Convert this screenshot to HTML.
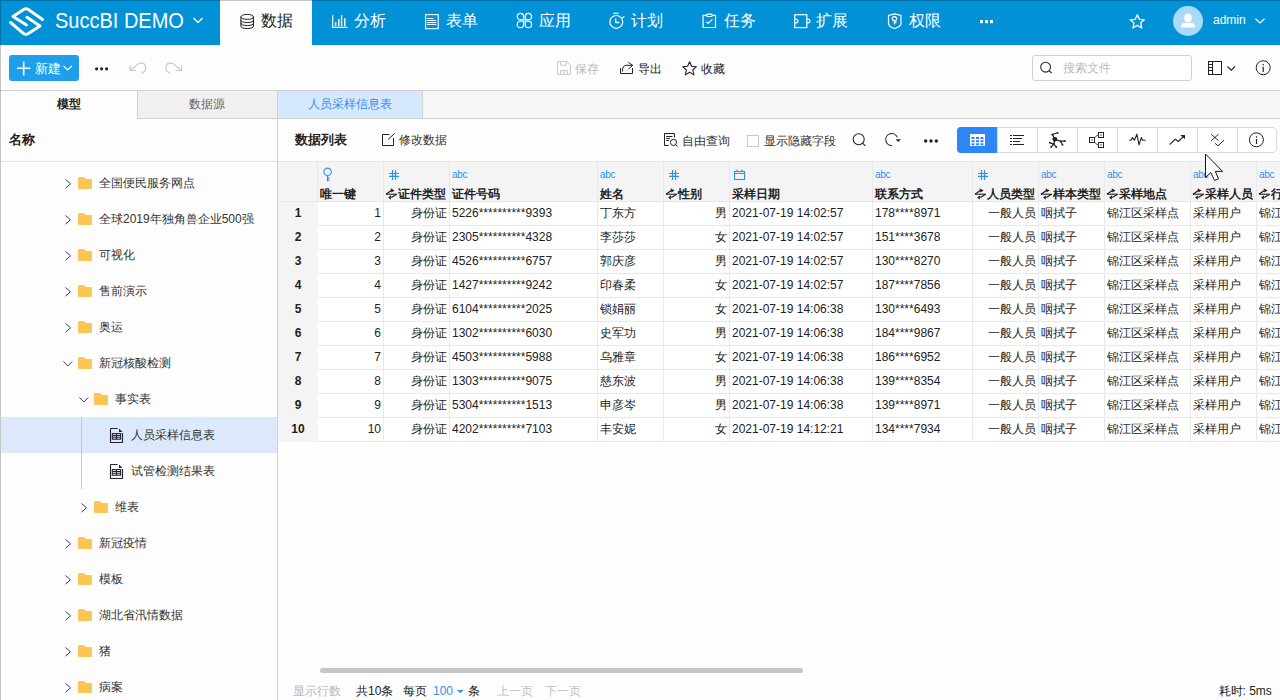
<!DOCTYPE html>
<html><head><meta charset="utf-8">
<style>
*{box-sizing:border-box;margin:0;padding:0}
html,body{width:1280px;height:700px;overflow:hidden;background:#fdfdfd;font-family:"Liberation Sans",sans-serif;color:#222}
.a{position:absolute;white-space:nowrap}
svg{position:absolute;overflow:visible}
#hdr{position:absolute;left:0;top:0;width:1280px;height:45px;background:#0091d6}
.nav{color:#fff;font-size:16px;line-height:16px;top:13px}
.t12{font-size:12px;line-height:14px}
.t13{font-size:13px;line-height:15px}
</style></head><body>
<div id="hdr"></div>
<!-- logo -->
<svg style="left:0;top:0" width="60" height="45" viewBox="0 0 60 45" fill="none" stroke="#fff" stroke-width="3" stroke-linecap="round" stroke-linejoin="round">
<path d="M42.5 19.5 L28 9.3 Q26 8 24 9.3 L13 16.5 L26.5 25"/>
<path d="M27 17.3 L40 26 L28 33.8 Q26 35 24 33.8 L10.5 22.5"/>
</svg>
<div class="a nav" style="left:55px;top:9.5px;font-size:20px;line-height:22px;transform:scaleY(1.06);transform-origin:0 17px">SuccBI DEMO</div>
<svg style="left:193px;top:17px" width="10" height="7" fill="none" stroke="#fff" stroke-width="1.3"><path d="M0.5 1 L5 5.5 L9.5 1"/></svg>
<!-- active tab -->
<div class="a" style="left:220px;top:0;width:92px;height:45px;background:#fdfdfd"></div>
<!-- NAV ICONS -->
<svg style="left:235px;top:8px" width="25" height="25" fill="none" stroke="#222" stroke-width="1">
<ellipse cx="12.2" cy="8.9" rx="6.3" ry="2.5"/>
<path d="M5.9 8.9 V18 M18.5 8.9 V18"/>
<path d="M5.9 12 Q5.9 14.5 12.2 14.5 Q18.5 14.5 18.5 12"/>
<path d="M5.9 15 Q5.9 17.5 12.2 17.5 Q18.5 17.5 18.5 15"/>
<path d="M5.9 18 Q5.9 20.5 12.2 20.5 Q18.5 20.5 18.5 18"/>
</svg>
<div class="a nav" style="left:261px;color:#222">数据</div>

<svg style="left:325px;top:8px" width="25" height="25" fill="none" stroke="#fff" stroke-width="1.2">
<path d="M7.7 7 V19.3 H22.5"/><path d="M10.7 14.1 V18.2 M13.75 11 V18.2 M16.6 7 V18.2 M19.8 10.2 V18.2" stroke-width="1.4"/>
</svg>
<div class="a nav" style="left:354px">分析</div>

<svg style="left:418px;top:8px" width="25" height="25" fill="none" stroke="#fff" stroke-width="1.1">
<rect x="7.6" y="6.6" width="12.6" height="14.1"/><path d="M8.9 10.5 H15.3 M8.9 12.5 H18.2 M8.9 14.5 H18.2 M8.9 16.4 H18.2" stroke-width="1"/>
</svg>
<div class="a nav" style="left:446px">表单</div>

<svg style="left:510px;top:8px" width="25" height="25" fill="none" stroke="#fff" stroke-width="1.2">
<path d="M13.6 11.7 H10.4 A3.2 3.2 0 1 1 13.6 8.5 Z"/><path d="M15.2 11.7 H18.4 A3.2 3.2 0 1 0 15.2 8.5 Z"/>
<path d="M13.6 13.2 H10.4 A3.2 3.2 0 1 0 13.6 16.4 Z"/><path d="M15.2 13.2 H18.4 A3.2 3.2 0 1 1 15.2 16.4 Z"/>
</svg>
<div class="a nav" style="left:539px">应用</div>

<svg style="left:604px;top:8px" width="25" height="25" fill="none" stroke="#fff" stroke-width="1.2">
<circle cx="12.3" cy="13.9" r="6.4"/><path d="M9.3 5.4 H14.6 M18.2 10 L20.4 8.4"/><path d="M11.7 10.4 V14.5 H15.4" stroke-width="1.3"/>
</svg>
<div class="a nav" style="left:631px">计划</div>

<svg style="left:697px;top:8px" width="25" height="25" fill="none" stroke="#fff" stroke-width="1.2">
<path d="M9.4 7.3 H6.1 V19.5 H18.5 V7.3 H15.2"/><rect x="9.6" y="6.2" width="5.6" height="2.3" rx="1"/><path d="M9.3 13.6 L11.1 15.4 L15.5 11.4"/>
</svg>
<div class="a nav" style="left:724px">任务</div>

<svg style="left:788px;top:8px" width="25" height="25" fill="none" stroke="#fff" stroke-width="1.2">
<rect x="6.7" y="6.7" width="12.1" height="12.9"/><path d="M6.7 11 H8 A1.9 1.9 0 0 1 8 14.8 H6.7 M18.8 11 H20 A1.9 1.9 0 0 1 20 14.8 H18.8"/>
</svg>
<div class="a nav" style="left:816px">扩展</div>

<svg style="left:882px;top:8px" width="25" height="25" fill="none" stroke="#fff" stroke-width="1.2">
<path d="M12.5 5.9 L19 7.4 V15.2 Q19 18.6 12.5 20.5 Q6.5 18.6 6.5 15.2 V7.4 Z"/><circle cx="12.5" cy="10.8" r="2.1"/><path d="M12.5 12.9 V16.6 M12.5 14.4 H14.6"/>
</svg>
<div class="a nav" style="left:909px">权限</div>

<svg style="left:980px;top:19.5px" width="14" height="4" fill="#fff"><rect x="0" y="0" width="3" height="3.2"/><rect x="5" y="0" width="3" height="3.2"/><rect x="10" y="0" width="3" height="3.2"/></svg>

<svg style="left:1129px;top:14px" width="17" height="15" fill="none" stroke="#fff" stroke-width="1.3" stroke-linejoin="round">
<path d="M8.3 0.8 L10.4 5.3 L15.4 5.8 L11.6 9.1 L12.7 14 L8.3 11.4 L3.9 14 L5 9.1 L1.2 5.8 L6.2 5.3 Z"/>
</svg>
<div class="a" style="left:1173px;top:6px;width:30px;height:30px;border-radius:50%;background:#abdaf9;overflow:hidden">
<svg style="left:0;top:0" width="30" height="30" fill="#fff"><ellipse cx="15" cy="12" rx="3.7" ry="4.5"/><path d="M8 21.6 V20 Q8 17.4 12 16.8 L15 17.6 L18 16.8 Q22 17.4 22 20 V21.6 Z"/></svg>
</div>
<div class="a" style="left:1213px;top:13px;color:#fff;font-size:12px;line-height:14px">admin</div>
<svg style="left:1255px;top:18px" width="10" height="6" fill="none" stroke="#fff" stroke-width="1.2"><path d="M0.5 0.8 L5 5 L9.5 0.8"/></svg>

<!-- TOOLBAR -->
<div class="a" style="left:9px;top:55px;width:70px;height:26px;border-radius:3px;background:#1f9fe9"></div>
<svg style="left:17px;top:60.7px" width="14" height="15" fill="none" stroke="#fff" stroke-width="1.6"><path d="M6.7 0.5 V14.5 M0 7.3 H13.3"/></svg>
<div class="a" style="left:34.5px;top:62px;color:#fff;font-size:12.5px;line-height:14px">新建</div>
<svg style="left:63px;top:65px" width="10" height="6" fill="none" stroke="#fff" stroke-width="1.2"><path d="M0.5 0.8 L4.7 5 L9 0.8"/></svg>
<svg style="left:95px;top:66.5px" width="14" height="4" fill="#222"><circle cx="1.6" cy="1.8" r="1.6"/><circle cx="6.6" cy="1.8" r="1.6"/><circle cx="11.6" cy="1.8" r="1.6"/></svg>
<svg style="left:125px;top:55px" width="65" height="27" fill="none" stroke="#c6c9c9" stroke-width="1.1">
<path d="M5.1 10.2 V15.5 H10.9 M5.5 15 L13.5 8.6 Q14.5 8.1 16.5 8.1 Q20.6 8.1 20.6 12.7 Q20.6 16.5 16.3 18.5"/>
<path d="M56.4 10.2 V15.5 H50.6 M56 15 L48 8.6 Q47 8.1 45 8.1 Q40.9 8.1 40.9 12.7 Q40.9 16.5 45.2 18.5"/>
</svg>

<svg style="left:552px;top:56px" width="25" height="24" fill="none" stroke="#c8cbcb" stroke-width="1">
<path d="M5.5 5.5 H14.7 L18.5 9.2 V18.5 H5.5 Z"/><path d="M8.5 5.5 V9.2 H14.2 V5.5"/><path d="M8.5 18.5 V14.5 H15.6 V18.5 M11.8 14.5 V18.5"/>
</svg>
<div class="a t12" style="left:575px;top:61.7px;color:#bbb">保存</div>
<svg style="left:615px;top:56px" width="25" height="24" fill="none" stroke="#222" stroke-width="1">
<path d="M5.5 12 V17.5 H17.5 V12"/><path d="M7.4 15.6 Q7.4 9.3 11 9.3 H17.6"/><path d="M13.4 6.3 L17.7 9.3 L13.4 13.2"/>
</svg>
<div class="a t12" style="left:638px;top:61.7px">导出</div>
<svg style="left:682px;top:61px" width="16" height="15" fill="none" stroke="#222" stroke-width="1.1" stroke-linejoin="round">
<path d="M7.6 0.8 L9.6 5.3 L14.5 5.7 L10.8 9 L11.9 13.9 L7.6 11.3 L3.3 13.9 L4.4 9 L0.7 5.7 L5.6 5.3 Z"/>
</svg>
<div class="a t12" style="left:701px;top:61.7px">收藏</div>

<div class="a" style="left:1032px;top:55px;width:160px;height:26px;border:1px solid #d0d0d0;border-radius:3px;background:#fff"></div>
<svg style="left:1040px;top:62px" width="13" height="12" fill="none" stroke="#222" stroke-width="1.05"><circle cx="5.6" cy="5.2" r="4.9"/><path d="M9 8.6 L11.6 11"/></svg>
<div class="a t12" style="left:1063px;top:61px;color:#bbb">搜索文件</div>
<svg style="left:1207px;top:61px" width="16" height="14" fill="none" stroke="#222" stroke-width="1"><rect x="1.5" y="0.5" width="13" height="13"/><path d="M5.5 0.5 V13.5 M1.5 3.5 H5.5 M1.5 6.5 H5.5 M1.5 9.5 H5.5"/></svg>
<svg style="left:1227px;top:65.5px" width="9" height="5" fill="none" stroke="#222" stroke-width="1.1"><path d="M0.5 0.5 L4.3 4.2 L8 0.5"/></svg>
<svg style="left:1255px;top:60px" width="16" height="16" fill="none" stroke="#222" stroke-width="1"><circle cx="8.2" cy="7.7" r="7"/><path d="M8.2 6.8 V12" stroke-width="1.2"/><rect x="7.6" y="3.9" width="1.2" height="1.4" fill="#222" stroke="none"/></svg>

<!-- TAB STRIP -->
<div class="a" style="left:0;top:90px;width:1280px;height:1px;background:#d2d2d2"></div>
<div class="a" style="left:1px;top:91px;width:136px;height:27px;background:#fdfdfd"></div>
<div class="a" style="left:137px;top:91px;width:140px;height:28px;background:#f0f0f0;border-left:1px solid #d2d2d2;border-bottom:1px solid #d2d2d2"></div>
<div class="a" style="left:277px;top:91px;width:146px;height:28px;background:#d6e8fd;border-left:1px solid #d2d2d2;border-right:1px solid #d2d2d2;border-bottom:1px solid #d2d2d2"></div>
<div class="a" style="left:423px;top:91px;width:857px;height:28px;background:#f7f7f7;border-bottom:1px solid #d2d2d2"></div>
<div class="a t12" style="left:57px;top:97px;font-weight:bold">模型</div>
<div class="a t12" style="left:189px;top:97px;color:#666">数据源</div>
<div class="a t12" style="left:308px;top:97px;color:#3b8cf2">人员采样信息表</div>

<!-- GEN -->
<div class="a" style="left:277px;top:118px;width:1px;height:582px;background:#d2d2d2"></div>
<div class="a" style="left:1px;top:161px;width:276px;height:1px;background:#e3e3e3"></div>
<div class="a t13" style="left:9px;top:132px;font-weight:bold">名称</div>
<svg style="left:65px;top:178.5px" width="7" height="10" fill="none" stroke="#333" stroke-width="0.95"><path d="M0.5 0.5 L5.5 4.8 L0.5 9.2"/></svg>
<svg style="left:78px;top:177px" width="14" height="12"><path d="M0 1 Q0 0 1 0 H6 L8 2 H13 Q14 2 14 3 V11 Q14 12 13 12 H1 Q0 12 0 11 Z" fill="#fcc655"/></svg>
<div class="a t12" style="left:99px;top:176px;color:#333">全国便民服务网点</div>
<svg style="left:65px;top:214.5px" width="7" height="10" fill="none" stroke="#333" stroke-width="0.95"><path d="M0.5 0.5 L5.5 4.8 L0.5 9.2"/></svg>
<svg style="left:78px;top:213px" width="14" height="12"><path d="M0 1 Q0 0 1 0 H6 L8 2 H13 Q14 2 14 3 V11 Q14 12 13 12 H1 Q0 12 0 11 Z" fill="#fcc655"/></svg>
<div class="a t12" style="left:99px;top:212px;color:#333">全球2019年独角兽企业500强</div>
<svg style="left:65px;top:250.5px" width="7" height="10" fill="none" stroke="#333" stroke-width="0.95"><path d="M0.5 0.5 L5.5 4.8 L0.5 9.2"/></svg>
<svg style="left:78px;top:249px" width="14" height="12"><path d="M0 1 Q0 0 1 0 H6 L8 2 H13 Q14 2 14 3 V11 Q14 12 13 12 H1 Q0 12 0 11 Z" fill="#fcc655"/></svg>
<div class="a t12" style="left:99px;top:248px;color:#333">可视化</div>
<svg style="left:65px;top:286.5px" width="7" height="10" fill="none" stroke="#333" stroke-width="0.95"><path d="M0.5 0.5 L5.5 4.8 L0.5 9.2"/></svg>
<svg style="left:78px;top:285px" width="14" height="12"><path d="M0 1 Q0 0 1 0 H6 L8 2 H13 Q14 2 14 3 V11 Q14 12 13 12 H1 Q0 12 0 11 Z" fill="#fcc655"/></svg>
<div class="a t12" style="left:99px;top:284px;color:#333">售前演示</div>
<svg style="left:65px;top:322.5px" width="7" height="10" fill="none" stroke="#333" stroke-width="0.95"><path d="M0.5 0.5 L5.5 4.8 L0.5 9.2"/></svg>
<svg style="left:78px;top:321px" width="14" height="12"><path d="M0 1 Q0 0 1 0 H6 L8 2 H13 Q14 2 14 3 V11 Q14 12 13 12 H1 Q0 12 0 11 Z" fill="#fcc655"/></svg>
<div class="a t12" style="left:99px;top:320px;color:#333">奥运</div>
<svg style="left:62.5px;top:360.5px" width="10" height="6" fill="none" stroke="#333" stroke-width="0.95"><path d="M0.5 0.5 L4.8 5 L9.2 0.5"/></svg>
<svg style="left:78px;top:357px" width="14" height="12"><path d="M0 1 Q0 0 1 0 H6 L8 2 H13 Q14 2 14 3 V11 Q14 12 13 12 H1 Q0 12 0 11 Z" fill="#fcc655"/></svg>
<div class="a t12" style="left:99px;top:356px;color:#333">新冠核酸检测</div>
<svg style="left:78.5px;top:396.5px" width="10" height="6" fill="none" stroke="#333" stroke-width="0.95"><path d="M0.5 0.5 L4.8 5 L9.2 0.5"/></svg>
<svg style="left:94px;top:393px" width="14" height="12"><path d="M0 1 Q0 0 1 0 H6 L8 2 H13 Q14 2 14 3 V11 Q14 12 13 12 H1 Q0 12 0 11 Z" fill="#fcc655"/></svg>
<div class="a t12" style="left:115px;top:392px;color:#333">事实表</div>
<div class="a" style="left:1px;top:417px;width:276px;height:36px;background:#dbe9fb"></div>
<svg style="left:110px;top:427.7px" width="13" height="15" fill="none" stroke="#2a2233" stroke-width="1.1"><path d="M0.5 0.5 H7.5 M12.5 5 V14.5 H0.5 V0.5"/><path d="M9 0.5 L12.5 4 H9 Z" fill="#2a2233" stroke="none"/><rect x="2.3" y="5.6" width="8.3" height="5.6"/><path d="M2.3 7.5 H10.6 M2.3 9.3 H10.6 M6.45 5.6 V11.2"/></svg>
<div class="a t12" style="left:131px;top:428px;color:#333">人员采样信息表</div>
<svg style="left:110px;top:463.7px" width="13" height="15" fill="none" stroke="#2a2233" stroke-width="1.1"><path d="M0.5 0.5 H7.5 M12.5 5 V14.5 H0.5 V0.5"/><path d="M9 0.5 L12.5 4 H9 Z" fill="#2a2233" stroke="none"/><rect x="2.3" y="5.6" width="8.3" height="5.6"/><path d="M2.3 7.5 H10.6 M2.3 9.3 H10.6 M6.45 5.6 V11.2"/></svg>
<div class="a t12" style="left:131px;top:464px;color:#333">试管检测结果表</div>
<svg style="left:81px;top:502.5px" width="7" height="10" fill="none" stroke="#333" stroke-width="0.95"><path d="M0.5 0.5 L5.5 4.8 L0.5 9.2"/></svg>
<svg style="left:94px;top:501px" width="14" height="12"><path d="M0 1 Q0 0 1 0 H6 L8 2 H13 Q14 2 14 3 V11 Q14 12 13 12 H1 Q0 12 0 11 Z" fill="#fcc655"/></svg>
<div class="a t12" style="left:115px;top:500px;color:#333">维表</div>
<svg style="left:65px;top:538.5px" width="7" height="10" fill="none" stroke="#333" stroke-width="0.95"><path d="M0.5 0.5 L5.5 4.8 L0.5 9.2"/></svg>
<svg style="left:78px;top:537px" width="14" height="12"><path d="M0 1 Q0 0 1 0 H6 L8 2 H13 Q14 2 14 3 V11 Q14 12 13 12 H1 Q0 12 0 11 Z" fill="#fcc655"/></svg>
<div class="a t12" style="left:99px;top:536px;color:#333">新冠疫情</div>
<svg style="left:65px;top:574.5px" width="7" height="10" fill="none" stroke="#333" stroke-width="0.95"><path d="M0.5 0.5 L5.5 4.8 L0.5 9.2"/></svg>
<svg style="left:78px;top:573px" width="14" height="12"><path d="M0 1 Q0 0 1 0 H6 L8 2 H13 Q14 2 14 3 V11 Q14 12 13 12 H1 Q0 12 0 11 Z" fill="#fcc655"/></svg>
<div class="a t12" style="left:99px;top:572px;color:#333">模板</div>
<svg style="left:65px;top:610.5px" width="7" height="10" fill="none" stroke="#333" stroke-width="0.95"><path d="M0.5 0.5 L5.5 4.8 L0.5 9.2"/></svg>
<svg style="left:78px;top:609px" width="14" height="12"><path d="M0 1 Q0 0 1 0 H6 L8 2 H13 Q14 2 14 3 V11 Q14 12 13 12 H1 Q0 12 0 11 Z" fill="#fcc655"/></svg>
<div class="a t12" style="left:99px;top:608px;color:#333">湖北省汛情数据</div>
<svg style="left:65px;top:646.5px" width="7" height="10" fill="none" stroke="#333" stroke-width="0.95"><path d="M0.5 0.5 L5.5 4.8 L0.5 9.2"/></svg>
<svg style="left:78px;top:645px" width="14" height="12"><path d="M0 1 Q0 0 1 0 H6 L8 2 H13 Q14 2 14 3 V11 Q14 12 13 12 H1 Q0 12 0 11 Z" fill="#fcc655"/></svg>
<div class="a t12" style="left:99px;top:644px;color:#333">猪</div>
<svg style="left:65px;top:682.5px" width="7" height="10" fill="none" stroke="#333" stroke-width="0.95"><path d="M0.5 0.5 L5.5 4.8 L0.5 9.2"/></svg>
<svg style="left:78px;top:681px" width="14" height="12"><path d="M0 1 Q0 0 1 0 H6 L8 2 H13 Q14 2 14 3 V11 Q14 12 13 12 H1 Q0 12 0 11 Z" fill="#fcc655"/></svg>
<div class="a t12" style="left:99px;top:680px;color:#333">病案</div>
<div class="a" style="left:81px;top:417px;width:1px;height:72px;background:#c8c8c8"></div>
<div class="a t13" style="left:295px;top:132px;font-weight:bold;color:#222">数据列表</div>
<svg style="left:375px;top:128px" width="25" height="24" fill="none" stroke="#222" stroke-width="1"><path d="M14.5 6.5 H7.5 V17.5 H18.5 V10"/><path d="M13 11.5 L19.7 5.3"/></svg>
<div class="a t12" style="left:399px;top:133px;color:#333">修改数据</div>
<svg style="left:655px;top:128px" width="30" height="24" fill="none" stroke="#222" stroke-width="1"><path d="M13.7 17.5 H9.5 V5.5 H19.5 V9.4"/><path d="M11.2 8.5 H17.5 M11.2 10.5 H14.8 M11.2 12.5 H13.9"/><circle cx="18.5" cy="14.4" r="3.1"/><path d="M20.7 16.6 L22.6 18.5"/></svg>
<div class="a t12" style="left:682px;top:134px;color:#333">自由查询</div>
<div class="a" style="left:747px;top:135px;width:12px;height:12px;border:1px solid #c8c8c8;background:#fff"></div>
<div class="a t12" style="left:764px;top:133.5px;color:#333">显示隐藏字段</div>
<svg style="left:845px;top:128px" width="25" height="24" fill="none" stroke="#222" stroke-width="1.05"><circle cx="13.7" cy="11.3" r="5.5"/><path d="M17.6 15.2 L20.3 17.8"/></svg>
<svg style="left:885px;top:128px" width="25" height="24" fill="none" stroke="#222" stroke-width="1.05"><path d="M12.3 9.3 A6 6 0 1 0 6.9 17.5"/><path d="M10.6 11.2 H16 L13.3 13.9 Z" fill="#222" stroke="none"/></svg>
<svg style="left:923.5px;top:138.6px" width="14" height="4" fill="#222"><circle cx="1.7" cy="2" r="1.7"/><circle cx="7" cy="2" r="1.7"/><circle cx="12.3" cy="2" r="1.7"/></svg>
<div class="a" style="left:957px;top:127px;width:320px;height:26px;border:1px solid #d9d9d9;border-radius:4px;background:#fff"></div>
<div class="a" style="left:957px;top:127px;width:40px;height:26px;border-radius:4px 0 0 4px;background:#2f86f6"></div>
<div class="a" style="left:997px;top:128px;width:1px;height:24px;background:#d9d9d9"></div>
<div class="a" style="left:1037px;top:128px;width:1px;height:24px;background:#d9d9d9"></div>
<div class="a" style="left:1077px;top:128px;width:1px;height:24px;background:#d9d9d9"></div>
<div class="a" style="left:1117px;top:128px;width:1px;height:24px;background:#d9d9d9"></div>
<div class="a" style="left:1157px;top:128px;width:1px;height:24px;background:#d9d9d9"></div>
<div class="a" style="left:1197px;top:128px;width:1px;height:24px;background:#d9d9d9"></div>
<div class="a" style="left:1237px;top:128px;width:1px;height:24px;background:#d9d9d9"></div>
<svg style="left:970px;top:134px" width="15" height="12"><rect x="0" y="0" width="15" height="12" fill="#fff"/><g fill="#2f86f6"><rect x="1.5" y="3" width="3" height="2"/><rect x="6" y="3" width="3" height="2"/><rect x="10.5" y="3" width="3" height="2"/><rect x="1.5" y="6.2" width="3" height="2"/><rect x="6" y="6.2" width="3" height="2"/><rect x="10.5" y="6.2" width="3" height="2"/><rect x="1.5" y="9.3" width="3" height="2"/><rect x="6" y="9.3" width="3" height="2"/><rect x="10.5" y="9.3" width="3" height="2"/></g></svg>
<svg style="left:1010px;top:135px" width="15" height="11" fill="#222"><rect x="0" y="0" width="2" height="1"/><rect x="3" y="0" width="11" height="1"/><rect x="0" y="3" width="2" height="1"/><rect x="3" y="3" width="9" height="1"/><rect x="0" y="6" width="2" height="1"/><rect x="3" y="6" width="7" height="1"/><rect x="0" y="9" width="2" height="1"/><rect x="3" y="9" width="11" height="1"/></svg>
<svg style="left:1045px;top:128px" width="25" height="24" fill="none" stroke="#222" stroke-width="1.2" stroke-linecap="round"><path d="M9.9 11.3 L7.4 6.5 L12.7 4.8 M9.9 11.3 L15.8 13.4 L19.9 12.9 M15.8 13.4 L17.5 16.8 M9.9 11.3 L8.7 16.1 L4.8 14.7 M8.7 16.1 L6.2 18.9 M8.7 16.1 L11.3 18.9"/><g fill="#222" stroke="none"><circle cx="9.9" cy="11.3" r="2.4"/><circle cx="7.4" cy="6.5" r="1.1"/><circle cx="12.7" cy="4.8" r="0.9"/><circle cx="15.8" cy="13.4" r="1"/><circle cx="19.9" cy="12.9" r="0.9"/><circle cx="17.5" cy="16.8" r="0.9"/><circle cx="8.7" cy="16.1" r="1.1"/><circle cx="4.8" cy="14.7" r="0.9"/><circle cx="6.2" cy="18.9" r="0.9"/><circle cx="11.3" cy="18.9" r="0.9"/></g></svg>
<svg style="left:1085px;top:128px" width="25" height="24" fill="none" stroke="#222" stroke-width="1"><rect x="4.5" y="9.5" width="5" height="5"/><rect x="13.5" y="4.5" width="5" height="5"/><rect x="13.5" y="14.5" width="5" height="5"/><path d="M9.5 9.5 L13.5 6.5 M9.5 14.5 L13.5 17.5" stroke-width="0.8"/><g fill="#222" stroke="none"><rect x="6.4" y="11.4" width="1.2" height="1.2"/><rect x="15.4" y="6.4" width="1.2" height="1.2"/><rect x="15.4" y="16.4" width="1.2" height="1.2"/></g></svg>
<svg style="left:1125px;top:128px" width="65" height="24" fill="none" stroke="#222" stroke-width="1.1" stroke-linejoin="round"><path d="M4.3 12.2 H6 L7.6 9.6 L9.4 12.2 L11.9 6.1 L14 16.8 L16.3 9.6 L17.5 12.2 H20.6"/><path d="M44.7 16.5 L50.3 11.2 L53.3 13.5 L59.4 7.6"/><path d="M55.3 7 H60 V11.2 Z" fill="#222" stroke="none"/></svg>
<svg style="left:1205px;top:128px" width="65" height="24" fill="none" stroke="#222" stroke-width="1"><path d="M6.3 6.3 L13.5 12.7 M13.5 6.3 L6.3 12.7"/><path d="M9.9 15.2 L13 17.8 L19 12.2"/><circle cx="51.4" cy="11.8" r="7"/><path d="M51.5 11 V16" stroke-width="1.2"/><rect x="50.9" y="8.3" width="1.2" height="1.4" fill="#222" stroke="none"/></svg>
<div class="a" style="left:278px;top:161px;width:1002px;height:1px;background:#e6e6e6"></div>
<div class="a" style="left:278px;top:162px;width:1002px;height:39px;background:#f4f4f4"></div>
<div class="a" style="left:278px;top:202px;width:40px;height:240px;background:#f4f4f4"></div>
<div class="a" style="left:318px;top:201px;width:962px;height:240px;background:#fff"></div>
<div class="a" style="left:317px;top:162px;width:1px;height:39px;background:#e8e8e8"></div>
<div class="a" style="left:383px;top:162px;width:1px;height:279px;background:#e8e8e8"></div>
<div class="a" style="left:449px;top:162px;width:1px;height:279px;background:#e8e8e8"></div>
<div class="a" style="left:597px;top:162px;width:1px;height:279px;background:#e8e8e8"></div>
<div class="a" style="left:663px;top:162px;width:1px;height:279px;background:#e8e8e8"></div>
<div class="a" style="left:729px;top:162px;width:1px;height:279px;background:#e8e8e8"></div>
<div class="a" style="left:872px;top:162px;width:1px;height:279px;background:#e8e8e8"></div>
<div class="a" style="left:972px;top:162px;width:1px;height:279px;background:#e8e8e8"></div>
<div class="a" style="left:1038px;top:162px;width:1px;height:279px;background:#e8e8e8"></div>
<div class="a" style="left:1104px;top:162px;width:1px;height:279px;background:#e8e8e8"></div>
<div class="a" style="left:1190px;top:162px;width:1px;height:279px;background:#e8e8e8"></div>
<div class="a" style="left:1256px;top:162px;width:1px;height:279px;background:#e8e8e8"></div>
<div class="a" style="left:278px;top:201px;width:1002px;height:1px;background:#e8e8e8"></div>
<div class="a" style="left:318px;top:225px;width:962px;height:1px;background:#e8e8e8"></div>
<div class="a" style="left:318px;top:249px;width:962px;height:1px;background:#e8e8e8"></div>
<div class="a" style="left:318px;top:273px;width:962px;height:1px;background:#e8e8e8"></div>
<div class="a" style="left:318px;top:297px;width:962px;height:1px;background:#e8e8e8"></div>
<div class="a" style="left:318px;top:321px;width:962px;height:1px;background:#e8e8e8"></div>
<div class="a" style="left:318px;top:345px;width:962px;height:1px;background:#e8e8e8"></div>
<div class="a" style="left:318px;top:369px;width:962px;height:1px;background:#e8e8e8"></div>
<div class="a" style="left:318px;top:393px;width:962px;height:1px;background:#e8e8e8"></div>
<div class="a" style="left:318px;top:417px;width:962px;height:1px;background:#e8e8e8"></div>
<div class="a" style="left:318px;top:441px;width:962px;height:1px;background:#e8e8e8"></div>
<svg style="left:323px;top:167px" width="10" height="15" fill="none" stroke="#2b90f0" stroke-width="1.1"><circle cx="4.6" cy="4.8" r="3.7"/><path d="M4.6 8.5 V14.5" stroke-width="1.3"/><path d="M4.6 11 H6.6 M4.6 13 H6.6"/></svg>
<div class="a" style="left:320px;top:187px;font-size:12px;line-height:14px;font-weight:bold;color:#222">唯一键</div>
<svg style="left:389px;top:170px" width="11" height="10" fill="none" stroke="#2b90f0" stroke-width="1.2"><path d="M3.5 0 V10 M6.5 0 V10 M0 3.5 H10 M0 6.3 H10"/></svg>
<svg style="left:383px;top:186px" width="16" height="16" fill="none" stroke="#222"><path d="M3 8.2 H13.7" stroke-width="1.1"/><path d="M3 8.2 L8.2 4.5 M13.7 8.2 L8.3 11.5" stroke-width="1.3"/><path d="M7.6 2.3 L11.6 4.5 L8.4 6.6 Z M5.1 11.5 L8.2 9.3 L7.6 13.7 Z" fill="#222" stroke="none"/></svg>
<div class="a" style="left:398px;top:187px;font-size:12px;line-height:14px;font-weight:bold;color:#222">证件类型</div>
<div class="a" style="left:452px;top:169px;font-size:10px;line-height:12px;color:#2b90f0;letter-spacing:-0.3px">abc</div>
<div class="a" style="left:452px;top:187px;font-size:12px;line-height:14px;font-weight:bold;color:#222">证件号码</div>
<div class="a" style="left:600px;top:169px;font-size:10px;line-height:12px;color:#2b90f0;letter-spacing:-0.3px">abc</div>
<div class="a" style="left:600px;top:187px;font-size:12px;line-height:14px;font-weight:bold;color:#222">姓名</div>
<svg style="left:669px;top:170px" width="11" height="10" fill="none" stroke="#2b90f0" stroke-width="1.2"><path d="M3.5 0 V10 M6.5 0 V10 M0 3.5 H10 M0 6.3 H10"/></svg>
<svg style="left:663px;top:186px" width="16" height="16" fill="none" stroke="#222"><path d="M3 8.2 H13.7" stroke-width="1.1"/><path d="M3 8.2 L8.2 4.5 M13.7 8.2 L8.3 11.5" stroke-width="1.3"/><path d="M7.6 2.3 L11.6 4.5 L8.4 6.6 Z M5.1 11.5 L8.2 9.3 L7.6 13.7 Z" fill="#222" stroke="none"/></svg>
<div class="a" style="left:678px;top:187px;font-size:12px;line-height:14px;font-weight:bold;color:#222">性别</div>
<svg style="left:734px;top:169px" width="11" height="11" fill="none" stroke="#2b90f0" stroke-width="1.1"><rect x="0.5" y="2.5" width="10" height="8"/><path d="M0.5 4.5 H10.5 M3 0.5 V3 M8 0.5 V3"/></svg>
<div class="a" style="left:732px;top:187px;font-size:12px;line-height:14px;font-weight:bold;color:#222">采样日期</div>
<div class="a" style="left:875px;top:169px;font-size:10px;line-height:12px;color:#2b90f0;letter-spacing:-0.3px">abc</div>
<div class="a" style="left:875px;top:187px;font-size:12px;line-height:14px;font-weight:bold;color:#222">联系方式</div>
<svg style="left:978px;top:170px" width="11" height="10" fill="none" stroke="#2b90f0" stroke-width="1.2"><path d="M3.5 0 V10 M6.5 0 V10 M0 3.5 H10 M0 6.3 H10"/></svg>
<svg style="left:972px;top:186px" width="16" height="16" fill="none" stroke="#222"><path d="M3 8.2 H13.7" stroke-width="1.1"/><path d="M3 8.2 L8.2 4.5 M13.7 8.2 L8.3 11.5" stroke-width="1.3"/><path d="M7.6 2.3 L11.6 4.5 L8.4 6.6 Z M5.1 11.5 L8.2 9.3 L7.6 13.7 Z" fill="#222" stroke="none"/></svg>
<div class="a" style="left:987px;top:187px;font-size:12px;line-height:14px;font-weight:bold;color:#222">人员类型</div>
<div class="a" style="left:1041px;top:169px;font-size:10px;line-height:12px;color:#2b90f0;letter-spacing:-0.3px">abc</div>
<svg style="left:1038px;top:186px" width="16" height="16" fill="none" stroke="#222"><path d="M3 8.2 H13.7" stroke-width="1.1"/><path d="M3 8.2 L8.2 4.5 M13.7 8.2 L8.3 11.5" stroke-width="1.3"/><path d="M7.6 2.3 L11.6 4.5 L8.4 6.6 Z M5.1 11.5 L8.2 9.3 L7.6 13.7 Z" fill="#222" stroke="none"/></svg>
<div class="a" style="left:1053px;top:187px;font-size:12px;line-height:14px;font-weight:bold;color:#222">样本类型</div>
<div class="a" style="left:1107px;top:169px;font-size:10px;line-height:12px;color:#2b90f0;letter-spacing:-0.3px">abc</div>
<svg style="left:1104px;top:186px" width="16" height="16" fill="none" stroke="#222"><path d="M3 8.2 H13.7" stroke-width="1.1"/><path d="M3 8.2 L8.2 4.5 M13.7 8.2 L8.3 11.5" stroke-width="1.3"/><path d="M7.6 2.3 L11.6 4.5 L8.4 6.6 Z M5.1 11.5 L8.2 9.3 L7.6 13.7 Z" fill="#222" stroke="none"/></svg>
<div class="a" style="left:1119px;top:187px;font-size:12px;line-height:14px;font-weight:bold;color:#222">采样地点</div>
<div class="a" style="left:1193px;top:169px;font-size:10px;line-height:12px;color:#2b90f0;letter-spacing:-0.3px">abc</div>
<svg style="left:1190px;top:186px" width="16" height="16" fill="none" stroke="#222"><path d="M3 8.2 H13.7" stroke-width="1.1"/><path d="M3 8.2 L8.2 4.5 M13.7 8.2 L8.3 11.5" stroke-width="1.3"/><path d="M7.6 2.3 L11.6 4.5 L8.4 6.6 Z M5.1 11.5 L8.2 9.3 L7.6 13.7 Z" fill="#222" stroke="none"/></svg>
<div class="a" style="left:1205px;top:187px;font-size:12px;line-height:14px;font-weight:bold;color:#222">采样人员</div>
<div class="a" style="left:1259px;top:169px;font-size:10px;line-height:12px;color:#2b90f0;letter-spacing:-0.3px">abc</div>
<svg style="left:1256px;top:186px" width="16" height="16" fill="none" stroke="#222"><path d="M3 8.2 H13.7" stroke-width="1.1"/><path d="M3 8.2 L8.2 4.5 M13.7 8.2 L8.3 11.5" stroke-width="1.3"/><path d="M7.6 2.3 L11.6 4.5 L8.4 6.6 Z M5.1 11.5 L8.2 9.3 L7.6 13.7 Z" fill="#222" stroke="none"/></svg>
<div class="a" style="left:1271px;top:187px;font-size:12px;line-height:14px;font-weight:bold;color:#222">行政区划</div>
<div class="a t12" style="left:278px;width:40px;text-align:center;top:206px;font-weight:bold">1</div>
<div class="a t12" style="left:181px;width:200px;text-align:right;top:206px">1</div>
<div class="a t12" style="left:247px;width:200px;text-align:right;top:206px">身份证</div>
<div class="a t12" style="left:452px;top:206px">5226**********9393</div>
<div class="a t12" style="left:600px;top:206px">丁东方</div>
<div class="a t12" style="left:527px;width:200px;text-align:right;top:206px">男</div>
<div class="a t12" style="left:732px;top:206px">2021-07-19 14:02:57</div>
<div class="a t12" style="left:875px;top:206px">178****8971</div>
<div class="a t12" style="left:836px;width:200px;text-align:right;top:206px">一般人员</div>
<div class="a t12" style="left:1041px;top:206px">咽拭子</div>
<div class="a t12" style="left:1107px;top:206px">锦江区采样点</div>
<div class="a t12" style="left:1193px;top:206px">采样用户</div>
<div class="a t12" style="left:1259px;top:206px">锦江区</div>
<div class="a t12" style="left:278px;width:40px;text-align:center;top:230px;font-weight:bold">2</div>
<div class="a t12" style="left:181px;width:200px;text-align:right;top:230px">2</div>
<div class="a t12" style="left:247px;width:200px;text-align:right;top:230px">身份证</div>
<div class="a t12" style="left:452px;top:230px">2305**********4328</div>
<div class="a t12" style="left:600px;top:230px">李莎莎</div>
<div class="a t12" style="left:527px;width:200px;text-align:right;top:230px">女</div>
<div class="a t12" style="left:732px;top:230px">2021-07-19 14:02:57</div>
<div class="a t12" style="left:875px;top:230px">151****3678</div>
<div class="a t12" style="left:836px;width:200px;text-align:right;top:230px">一般人员</div>
<div class="a t12" style="left:1041px;top:230px">咽拭子</div>
<div class="a t12" style="left:1107px;top:230px">锦江区采样点</div>
<div class="a t12" style="left:1193px;top:230px">采样用户</div>
<div class="a t12" style="left:1259px;top:230px">锦江区</div>
<div class="a t12" style="left:278px;width:40px;text-align:center;top:254px;font-weight:bold">3</div>
<div class="a t12" style="left:181px;width:200px;text-align:right;top:254px">3</div>
<div class="a t12" style="left:247px;width:200px;text-align:right;top:254px">身份证</div>
<div class="a t12" style="left:452px;top:254px">4526**********6757</div>
<div class="a t12" style="left:600px;top:254px">郭庆彦</div>
<div class="a t12" style="left:527px;width:200px;text-align:right;top:254px">男</div>
<div class="a t12" style="left:732px;top:254px">2021-07-19 14:02:57</div>
<div class="a t12" style="left:875px;top:254px">130****8270</div>
<div class="a t12" style="left:836px;width:200px;text-align:right;top:254px">一般人员</div>
<div class="a t12" style="left:1041px;top:254px">咽拭子</div>
<div class="a t12" style="left:1107px;top:254px">锦江区采样点</div>
<div class="a t12" style="left:1193px;top:254px">采样用户</div>
<div class="a t12" style="left:1259px;top:254px">锦江区</div>
<div class="a t12" style="left:278px;width:40px;text-align:center;top:278px;font-weight:bold">4</div>
<div class="a t12" style="left:181px;width:200px;text-align:right;top:278px">4</div>
<div class="a t12" style="left:247px;width:200px;text-align:right;top:278px">身份证</div>
<div class="a t12" style="left:452px;top:278px">1427**********9242</div>
<div class="a t12" style="left:600px;top:278px">印春柔</div>
<div class="a t12" style="left:527px;width:200px;text-align:right;top:278px">女</div>
<div class="a t12" style="left:732px;top:278px">2021-07-19 14:02:57</div>
<div class="a t12" style="left:875px;top:278px">187****7856</div>
<div class="a t12" style="left:836px;width:200px;text-align:right;top:278px">一般人员</div>
<div class="a t12" style="left:1041px;top:278px">咽拭子</div>
<div class="a t12" style="left:1107px;top:278px">锦江区采样点</div>
<div class="a t12" style="left:1193px;top:278px">采样用户</div>
<div class="a t12" style="left:1259px;top:278px">锦江区</div>
<div class="a t12" style="left:278px;width:40px;text-align:center;top:302px;font-weight:bold">5</div>
<div class="a t12" style="left:181px;width:200px;text-align:right;top:302px">5</div>
<div class="a t12" style="left:247px;width:200px;text-align:right;top:302px">身份证</div>
<div class="a t12" style="left:452px;top:302px">6104**********2025</div>
<div class="a t12" style="left:600px;top:302px">锁娟丽</div>
<div class="a t12" style="left:527px;width:200px;text-align:right;top:302px">女</div>
<div class="a t12" style="left:732px;top:302px">2021-07-19 14:06:38</div>
<div class="a t12" style="left:875px;top:302px">130****6493</div>
<div class="a t12" style="left:836px;width:200px;text-align:right;top:302px">一般人员</div>
<div class="a t12" style="left:1041px;top:302px">咽拭子</div>
<div class="a t12" style="left:1107px;top:302px">锦江区采样点</div>
<div class="a t12" style="left:1193px;top:302px">采样用户</div>
<div class="a t12" style="left:1259px;top:302px">锦江区</div>
<div class="a t12" style="left:278px;width:40px;text-align:center;top:326px;font-weight:bold">6</div>
<div class="a t12" style="left:181px;width:200px;text-align:right;top:326px">6</div>
<div class="a t12" style="left:247px;width:200px;text-align:right;top:326px">身份证</div>
<div class="a t12" style="left:452px;top:326px">1302**********6030</div>
<div class="a t12" style="left:600px;top:326px">史军功</div>
<div class="a t12" style="left:527px;width:200px;text-align:right;top:326px">男</div>
<div class="a t12" style="left:732px;top:326px">2021-07-19 14:06:38</div>
<div class="a t12" style="left:875px;top:326px">184****9867</div>
<div class="a t12" style="left:836px;width:200px;text-align:right;top:326px">一般人员</div>
<div class="a t12" style="left:1041px;top:326px">咽拭子</div>
<div class="a t12" style="left:1107px;top:326px">锦江区采样点</div>
<div class="a t12" style="left:1193px;top:326px">采样用户</div>
<div class="a t12" style="left:1259px;top:326px">锦江区</div>
<div class="a t12" style="left:278px;width:40px;text-align:center;top:350px;font-weight:bold">7</div>
<div class="a t12" style="left:181px;width:200px;text-align:right;top:350px">7</div>
<div class="a t12" style="left:247px;width:200px;text-align:right;top:350px">身份证</div>
<div class="a t12" style="left:452px;top:350px">4503**********5988</div>
<div class="a t12" style="left:600px;top:350px">乌雅章</div>
<div class="a t12" style="left:527px;width:200px;text-align:right;top:350px">女</div>
<div class="a t12" style="left:732px;top:350px">2021-07-19 14:06:38</div>
<div class="a t12" style="left:875px;top:350px">186****6952</div>
<div class="a t12" style="left:836px;width:200px;text-align:right;top:350px">一般人员</div>
<div class="a t12" style="left:1041px;top:350px">咽拭子</div>
<div class="a t12" style="left:1107px;top:350px">锦江区采样点</div>
<div class="a t12" style="left:1193px;top:350px">采样用户</div>
<div class="a t12" style="left:1259px;top:350px">锦江区</div>
<div class="a t12" style="left:278px;width:40px;text-align:center;top:374px;font-weight:bold">8</div>
<div class="a t12" style="left:181px;width:200px;text-align:right;top:374px">8</div>
<div class="a t12" style="left:247px;width:200px;text-align:right;top:374px">身份证</div>
<div class="a t12" style="left:452px;top:374px">1303**********9075</div>
<div class="a t12" style="left:600px;top:374px">慈东波</div>
<div class="a t12" style="left:527px;width:200px;text-align:right;top:374px">男</div>
<div class="a t12" style="left:732px;top:374px">2021-07-19 14:06:38</div>
<div class="a t12" style="left:875px;top:374px">139****8354</div>
<div class="a t12" style="left:836px;width:200px;text-align:right;top:374px">一般人员</div>
<div class="a t12" style="left:1041px;top:374px">咽拭子</div>
<div class="a t12" style="left:1107px;top:374px">锦江区采样点</div>
<div class="a t12" style="left:1193px;top:374px">采样用户</div>
<div class="a t12" style="left:1259px;top:374px">锦江区</div>
<div class="a t12" style="left:278px;width:40px;text-align:center;top:398px;font-weight:bold">9</div>
<div class="a t12" style="left:181px;width:200px;text-align:right;top:398px">9</div>
<div class="a t12" style="left:247px;width:200px;text-align:right;top:398px">身份证</div>
<div class="a t12" style="left:452px;top:398px">5304**********1513</div>
<div class="a t12" style="left:600px;top:398px">申彦岑</div>
<div class="a t12" style="left:527px;width:200px;text-align:right;top:398px">男</div>
<div class="a t12" style="left:732px;top:398px">2021-07-19 14:06:38</div>
<div class="a t12" style="left:875px;top:398px">139****8971</div>
<div class="a t12" style="left:836px;width:200px;text-align:right;top:398px">一般人员</div>
<div class="a t12" style="left:1041px;top:398px">咽拭子</div>
<div class="a t12" style="left:1107px;top:398px">锦江区采样点</div>
<div class="a t12" style="left:1193px;top:398px">采样用户</div>
<div class="a t12" style="left:1259px;top:398px">锦江区</div>
<div class="a t12" style="left:278px;width:40px;text-align:center;top:422px;font-weight:bold">10</div>
<div class="a t12" style="left:181px;width:200px;text-align:right;top:422px">10</div>
<div class="a t12" style="left:247px;width:200px;text-align:right;top:422px">身份证</div>
<div class="a t12" style="left:452px;top:422px">4202**********7103</div>
<div class="a t12" style="left:600px;top:422px">丰安妮</div>
<div class="a t12" style="left:527px;width:200px;text-align:right;top:422px">女</div>
<div class="a t12" style="left:732px;top:422px">2021-07-19 14:12:21</div>
<div class="a t12" style="left:875px;top:422px">134****7934</div>
<div class="a t12" style="left:836px;width:200px;text-align:right;top:422px">一般人员</div>
<div class="a t12" style="left:1041px;top:422px">咽拭子</div>
<div class="a t12" style="left:1107px;top:422px">锦江区采样点</div>
<div class="a t12" style="left:1193px;top:422px">采样用户</div>
<div class="a t12" style="left:1259px;top:422px">锦江区</div>
<div class="a" style="left:320px;top:668px;width:483px;height:5px;border-radius:3px;background:#c5c6c8"></div>
<div class="a t12" style="left:293px;top:684px;color:#bbb">显示行数</div>
<div class="a t12" style="left:356px;top:684px;color:#222">共10条</div>
<div class="a t12" style="left:403px;top:684px;color:#222">每页</div>
<div class="a t12" style="left:433px;top:684px;color:#3a8ee6">100</div>
<svg style="left:456.5px;top:689.5px" width="8" height="5" fill="#3a8ee6"><path d="M0 0 H6.6 L3.3 3.3 Z"/></svg>
<div class="a t12" style="left:468px;top:684px;color:#222">条</div>
<div class="a t12" style="left:496.7px;top:684px;color:#c0c0c0">上一页</div>
<div class="a t12" style="left:544.7px;top:684px;color:#c0c0c0">下一页</div>
<div class="a t12" style="left:1218.5px;top:684px;color:#222">耗时: 5ms</div>
<svg style="left:1204px;top:152.6px" width="22" height="30"><path d="M1.5 1 V24.5 L6.8 19.5 L10.6 27.5 L14.5 25.8 L11.3 18.4 H18.6 Z" fill="#fff" stroke="#1a1020" stroke-width="1" stroke-linejoin="miter"/></svg>
<!-- /GEN -->
<div class="a" style="left:0;top:0;width:1280px;height:1px;background:rgba(0,0,0,0.22)"></div>
<div class="a" style="left:0;top:1px;width:1px;height:699px;background:rgba(0,0,0,0.22)"></div>
</body></html>
